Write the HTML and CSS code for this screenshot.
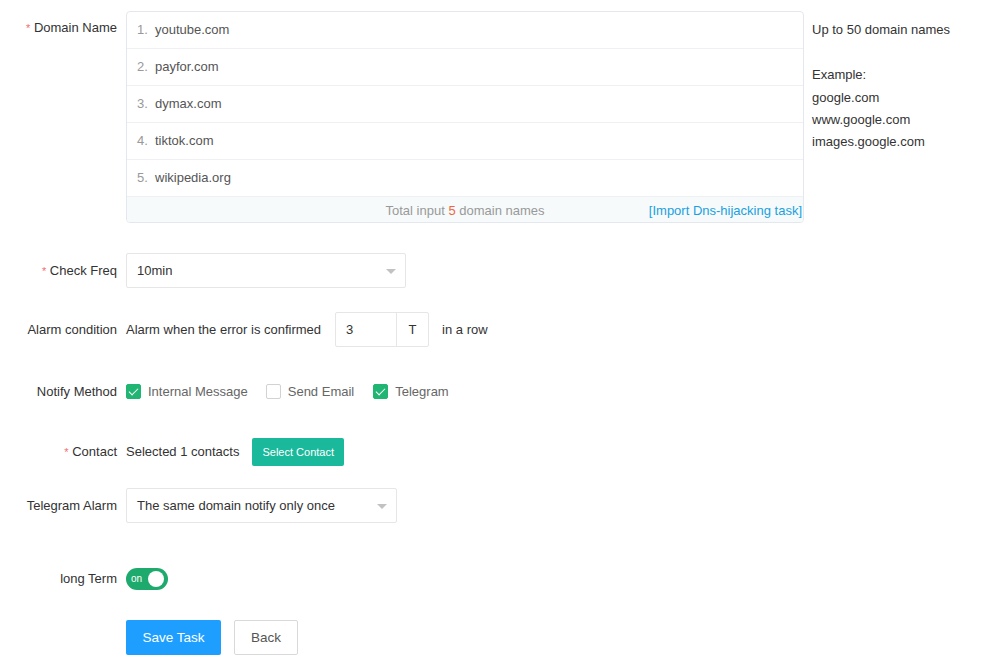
FILE: index.html
```html
<!DOCTYPE html>
<html lang="en">
<head>
    <meta charset="UTF-8">
    <title>Dns-hijacking task</title>
    <link rel="stylesheet" href="styles.css">
</head>
<body>
    <form class="task-form">
        <div class="form-item item-domain">
            <label class="form-label top"><span class="req">*</span> Domain Name</label>
            <div class="domain-box">
                <div class="domain-row"><span class="num">1.</span>youtube.com</div>
                <div class="domain-row"><span class="num">2.</span>payfor.com</div>
                <div class="domain-row"><span class="num">3.</span>dymax.com</div>
                <div class="domain-row"><span class="num">4.</span>tiktok.com</div>
                <div class="domain-row"><span class="num">5.</span>wikipedia.org</div>
                <div class="domain-foot">
                    <span class="total">Total input <b>5</b> domain names</span>
                    <a class="import-link">[Import Dns-hijacking task]</a>
                </div>
            </div>
            <div class="help">
                <p>Up to 50 domain names</p>
                <p class="gap">Example:</p>
                <p>google.com</p>
                <p>www.google.com</p>
                <p>images.google.com</p>
            </div>
        </div>

        <div class="form-item item-freq">
            <label class="form-label"><span class="req">*</span> Check Freq</label>
            <div class="select select-freq">
                <span>10min</span>
                <i class="arrow"></i>
            </div>
        </div>

        <div class="form-item item-alarm">
            <label class="form-label">Alarm condition</label>
            <span class="text">Alarm when the error is confirmed</span>
            <div class="num-input">
                <span class="val">3</span>
                <span class="unit">T</span>
            </div>
            <span class="text">in a row</span>
        </div>

        <div class="form-item item-notify">
            <label class="form-label">Notify Method</label>
            <label class="checkbox checked"><i class="box"></i>Internal Message</label>
            <label class="checkbox"><i class="box"></i>Send Email</label>
            <label class="checkbox checked"><i class="box"></i>Telegram</label>
        </div>

        <div class="form-item item-contact">
            <label class="form-label"><span class="req">*</span> Contact</label>
            <span class="text">Selected 1 contacts</span>
            <button type="button" class="btn-contact">Select Contact</button>
        </div>

        <div class="form-item item-tg">
            <label class="form-label">Telegram Alarm</label>
            <div class="select select-tg">
                <span>The same domain notify only once</span>
                <i class="arrow"></i>
            </div>
        </div>

        <div class="form-item item-term">
            <label class="form-label">long Term</label>
            <span class="switch"><span class="switch-text">on</span><i class="knob"></i></span>
        </div>

        <div class="form-item item-actions">
            <button type="button" class="btn btn-primary">Save Task</button>
            <button type="button" class="btn btn-default">Back</button>
        </div>
    </form>
</body>
</html>
```

FILE: styles.css
```css
body {
    margin: 0;
    font-family: "Liberation Sans", Arial, sans-serif;
    font-size: 13px;
    color: #333;
    background: #fff;
}
.task-form {
    padding-top: 11px;
}
.form-item {
    display: flex;
    align-items: center;
    min-height: 35px;
}
.form-label {
    width: 117px;
    padding-right: 9px;
    text-align: right;
    flex-shrink: 0;
    color: #333;
}
.form-label.top {
    align-self: flex-start;
    line-height: 34px;
}
.req {
    color: #f56c6c;
    font-size: 11px;
}
.text {
    color: #333;
}

/* domain list */
.item-domain {
    align-items: flex-start;
}
.domain-box {
    width: 676px;
    border: 1px solid #e4e7ed;
    border-radius: 4px;
    overflow: hidden;
}
.domain-row {
    box-sizing: border-box;
    height: 37px;
    line-height: 35px;
    border-bottom: 1px solid #eef0f4;
    padding-left: 10px;
    color: #555;
}
.domain-row .num {
    display: inline-block;
    width: 18px;
    color: #999;
}
.domain-foot {
    position: relative;
    height: 25px;
    line-height: 27px;
    background: #f6fafb;
    text-align: center;
    color: #999;
}
.domain-foot b {
    font-weight: normal;
    color: #f2653a;
}
.import-link {
    position: absolute;
    right: 1px;
    top: 0;
    color: #1aa0e0;
    cursor: pointer;
}
.help {
    margin-left: 8px;
    padding-top: 8px;
    color: #333;
}
.help p {
    margin: 0;
    line-height: 22.3px;
}
.help .gap {
    margin-top: 23px;
}

/* selects */
.item-freq {
    margin-top: 30px;
}
.select {
    position: relative;
    box-sizing: border-box;
    height: 35px;
    line-height: 33px;
    padding-left: 10px;
    border: 1px solid #e6e6e6;
    border-radius: 2px;
    color: #333;
}
.select-freq {
    width: 280px;
}
.select-tg {
    width: 271px;
}
.arrow {
    position: absolute;
    right: 9px;
    top: 15px;
    width: 0;
    height: 0;
    border-left: 5px solid transparent;
    border-right: 5px solid transparent;
    border-top: 5px solid #c2c2c2;
}

/* alarm */
.item-alarm {
    margin-top: 24px;
}
.num-input {
    display: flex;
    box-sizing: border-box;
    height: 35px;
    line-height: 33px;
    margin: 0 13px 0 14px;
    border: 1px solid #e6e6e6;
    border-radius: 2px;
}
.num-input .val {
    width: 61px;
    padding-left: 10px;
    box-sizing: border-box;
    border-right: 1px solid #e6e6e6;
}
.num-input .unit {
    width: 31px;
    text-align: center;
}

/* checkboxes */
.item-notify {
    margin-top: 27px;
}
.checkbox {
    display: flex;
    align-items: center;
    color: #666;
}
.checkbox .box {
    box-sizing: border-box;
    width: 15px;
    height: 15px;
    margin-right: 7px;
    border: 1px solid #d2d2d2;
    border-radius: 2px;
    position: relative;
}
.checkbox.checked .box {
    background: #21b574;
    border-color: #21b574;
}
.checkbox.checked .box::after {
    content: "";
    position: absolute;
    left: 4px;
    top: 1px;
    width: 4px;
    height: 8px;
    border: solid #fff;
    border-width: 0 1.5px 1.5px 0;
    transform: rotate(45deg);
}
.item-notify .checkbox:nth-of-type(2) {
    margin-right: 18px;
}
.item-notify .checkbox:nth-of-type(3) {
    margin-right: 19px;
}

/* contact */
.item-contact {
    margin-top: 25px;
}
.btn-contact {
    margin-left: 13px;
    height: 28px;
    padding: 0 10px;
    border: none;
    border-radius: 2px;
    background: #1ab99c;
    color: #fff;
    font-family: inherit;
    font-size: 11px;
}

.item-tg {
    margin-top: 19px;
}

/* switch */
.item-term {
    margin-top: 38px;
}
.switch {
    position: relative;
    display: inline-block;
    width: 42px;
    height: 22px;
    border-radius: 11px;
    background: #1daa6c;
}
.switch-text {
    position: absolute;
    left: 5px;
    top: 0;
    line-height: 22px;
    font-size: 10px;
    color: #fff;
}
.knob {
    position: absolute;
    right: 4px;
    top: 3px;
    width: 16px;
    height: 16px;
    border-radius: 50%;
    background: #fff;
}

/* actions */
.item-actions {
    margin-top: 24px;
    padding-left: 126px;
}
.btn {
    height: 35px;
    border-radius: 2px;
    font-family: inherit;
    font-size: 13.5px;
    cursor: pointer;
}
.btn-primary {
    width: 95px;
    border: none;
    background: #1e9fff;
    color: #fff;
}
.btn-default {
    width: 64px;
    margin-left: 13px;
    border: 1px solid #d9d9d9;
    background: #fff;
    color: #555;
}
```
